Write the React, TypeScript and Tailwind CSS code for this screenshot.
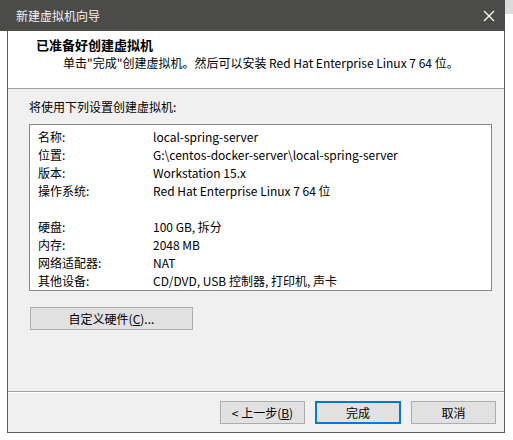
import React from 'react';

const rows1 = [
    ['名称:', 'local-spring-server'],
    ['位置:', 'G:\\centos-docker-server\\local-spring-server'],
    ['版本:', 'Workstation 15.x'],
    ['操作系统:', 'Red Hat Enterprise Linux 7 64 位'],
];

const rows2 = [
    ['硬盘:', '100 GB, 拆分'],
    ['内存:', '2048 MB'],
    ['网络适配器:', 'NAT'],
    ['其他设备:', 'CD/DVD, USB 控制器, 打印机, 声卡'],
];

function Row({ label, value }: { label: string; value: string }) {
    return (
        <div className="flex h-[18px] items-center">
            <span className="w-[115px] shrink-0">{label}</span>
            <span className="whitespace-nowrap">{value}</span>
        </div>
    );
}

export default function App() {
    return (
        <div
            className="flex w-[513px] h-[440px] bg-white text-[12px] text-black"
            style={{ fontFamily: '"Noto Sans CJK SC", "Noto Sans", sans-serif' }}
        >
            <div className="w-[505px] flex flex-col">
                {/* title bar */}
                <div className="h-[31px] bg-[#4b4b49] flex items-center justify-between pl-[16px] pr-[10px] text-[#f2f2f2]">
                    <span className="text-[12px]">新建虚拟机向导</span>
                    <svg width="12" height="12" viewBox="0 0 12 12" stroke="#ffffff" strokeWidth="1.2">
                        <path d="M1 1L11 11M11 1L1 11" />
                    </svg>
                </div>

                <div className="ml-[7px] h-[402px] flex flex-col border-l border-r border-b border-[#5c5c5c]">
                    {/* header */}
                    <div className="h-[58px] bg-white border-b border-[#a0a0a0] pt-[5px]">
                        <div className="pl-[28px] h-[18px] flex items-center font-bold text-[13px]">已准备好创建虚拟机</div>
                        <div className="pl-[55px] h-[18px] flex items-center">
                            单击"完成"创建虚拟机。然后可以安装 Red Hat Enterprise Linux 7 64 位。
                        </div>
                    </div>

                    {/* body */}
                    <div className="flex-1 bg-[#f0f0f0] border-b border-[#a0a0a0] px-[21px] pt-[9px]">
                        <div className="h-[18px] flex items-center">将使用下列设置创建虚拟机:</div>
                        <div className="mt-[8px] h-[167px] w-[463px] bg-white border border-[#828790] pl-[8px] pt-[3px]">
                            {rows1.map(([l, v]) => (
                                <Row key={l} label={l} value={v} />
                            ))}
                            <div className="h-[18px]" />
                            {rows2.map(([l, v]) => (
                                <Row key={l} label={l} value={v} />
                            ))}
                        </div>
                        <button className="mt-[16px] ml-[1px] w-[163px] h-[23px] bg-[#e1e1e1] border border-[#adadad] flex items-center justify-center">
                            自定义硬件(<span className="underline">C</span>)...
                        </button>
                    </div>

                    {/* footer */}
                    <div className="h-[40px] bg-[#f0f0f0] flex items-center justify-end gap-[10px] pr-[8px] border-t border-white">
                        <button className="w-[85px] h-[23px] bg-[#e1e1e1] border border-[#adadad] flex items-center justify-center">
                            &lt; 上一步(<span className="underline">B</span>)
                        </button>
                        <button className="w-[86px] h-[23px] bg-[#e1e1e1] border-2 border-[#0078d7] flex items-center justify-center">
                            完成
                        </button>
                        <button className="w-[85px] h-[23px] bg-[#e1e1e1] border border-[#adadad] flex items-center justify-center">
                            取消
                        </button>
                    </div>
                </div>
            </div>
            <div className="w-[8px]">
                <div className="h-[14px] bg-[#dcdcdc]" />
            </div>
        </div>
    );
}
